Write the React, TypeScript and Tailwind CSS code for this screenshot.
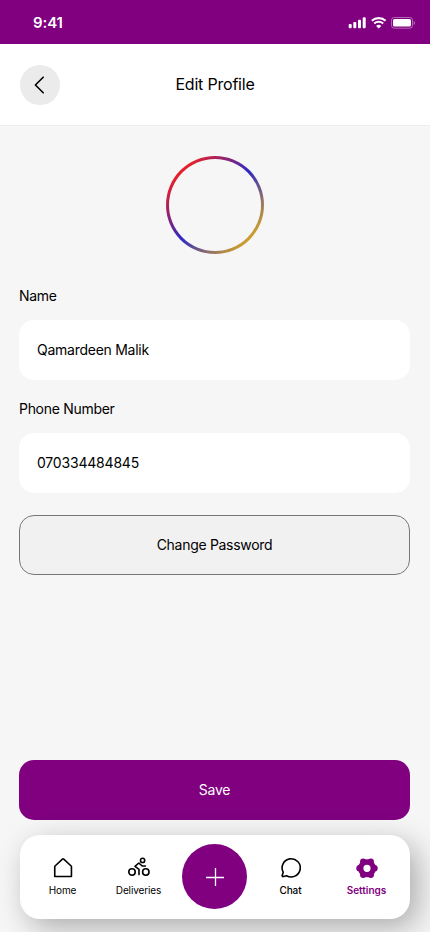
import React from "react";

function StatusBar() {
  return (
    <div className="flex h-11 items-center justify-between bg-[#800080] pl-[33px] pr-[15px] text-white">
      <span className="mt-[2px] text-[15px] leading-5 font-semibold tracking-[-0.1px]">9:41</span>
      <svg className="mt-[2px]" width="67" height="12" viewBox="0 0 67 12" fill="none">
        <rect x="0.7" y="7" width="3" height="4.3" rx="1" fill="white" />
        <rect x="5.3" y="5" width="3" height="6.3" rx="1" fill="white" />
        <rect x="10" y="2.7" width="3" height="8.6" rx="1" fill="white" />
        <rect x="14.7" y="0.3" width="3" height="11" rx="1" fill="white" />
        <path d="M23.8 3.8a10.2 10.2 0 0 1 13.8 0" stroke="white" strokeWidth="2.1" />
        <path d="M26.2 6.5a6.7 6.7 0 0 1 9 0" stroke="white" strokeWidth="2" />
        <path d="M28.1 9a3.9 3.9 0 0 1 5.2 0l-2.6 2.6z" fill="white" />
        <rect x="43.5" y="0.5" width="21" height="10.7" rx="2.7" stroke="white" strokeOpacity="0.4" />
        <rect x="45" y="2" width="18" height="7.6" rx="1.5" fill="white" />
        <path d="M65.7 4v4c.8-.3 1.3-1.1 1.3-2s-.5-1.7-1.3-2z" fill="white" fillOpacity="0.4" />
      </svg>
    </div>
  );
}

function Field({ label, value, valueStyle }: { label: string; value: string; valueStyle: string }) {
  return (
    <div>
      <div className="h-6 text-[14px] leading-6 tracking-[-0.3px]">{label}</div>
      <div className={`mt-3 flex h-[60px] items-center rounded-[15px] bg-white px-[18px] pb-px text-[14px] ${valueStyle}`}>
        {value}
      </div>
    </div>
  );
}

function HomeIcon() {
  return (
    <svg width="24" height="24" viewBox="0 0 24 24" fill="none" stroke="currentColor" strokeWidth="1.6" strokeLinejoin="round">
      <path d="M3.75 20.5V10.7a1 1 0 0 1 .3-.7l7.4-6.8a1 1 0 0 1 1.3 0l7.4 6.8a1 1 0 0 1 .3.7v9.8z" />
    </svg>
  );
}

function BikeIcon() {
  return (
    <svg width="24" height="24" viewBox="0 0 24 24" fill="none" stroke="currentColor" strokeWidth="1.6" strokeLinecap="round" strokeLinejoin="round">
      <circle cx="5" cy="16" r="3.2" />
      <circle cx="18.8" cy="16" r="3.2" />
      <circle cx="15.6" cy="4.4" r="2.1" />
      <path d="M18.4 10h-3.2l-3.4-3-3.8 3.4 4 3v5.2" />
    </svg>
  );
}

function ChatIcon() {
  return (
    <svg width="24" height="24" viewBox="0 0 24 24" fill="none" stroke="currentColor" strokeWidth="1.6" strokeLinecap="round" strokeLinejoin="round">
      <path d="M7.6 19.7a9.1 9.1 0 1 0-3.4-3.5l-1 3.2a.85.85 0 0 0 1.1 1.1z" />
    </svg>
  );
}

function SettingsIcon() {
  return (
    <svg width="24" height="24" viewBox="0 0 24 24" fill="none">
      <circle cx="12" cy="12.3" r="6.3" stroke="currentColor" strokeWidth="5.4" />
      <g fill="currentColor">
        <circle cx="4.5" cy="12.3" r="3.2" />
        <circle cx="19.5" cy="12.3" r="3.2" />
        <circle cx="8.25" cy="5.8" r="3.2" />
        <circle cx="15.75" cy="5.8" r="3.2" />
        <circle cx="8.25" cy="18.8" r="3.2" />
        <circle cx="15.75" cy="18.8" r="3.2" />
      </g>
    </svg>
  );
}

function NavItem({ icon, label, style }: { icon: React.ReactNode; label: string; style: string }) {
  return (
    <div className={`flex w-[76px] flex-col items-center pt-[21px] ${style}`}>
      {icon}
      <span className="mt-[2px] text-[10px] leading-4">{label}</span>
    </div>
  );
}

export default function App() {
  return (
    <div className="flex h-[932px] w-[430px] flex-col overflow-hidden bg-[#f6f6f6] font-['Inter',sans-serif] text-black">
      <StatusBar />
      <header className="grid h-[82px] shrink-0 grid-cols-[40px_1fr_40px] items-center border-b border-[#eeeeee] bg-white px-5">
        <button className="flex size-10 items-center justify-center rounded-full bg-[#ebebeb]">
          <svg width="20" height="20" viewBox="0 0 20 20" fill="none" stroke="black" strokeWidth="1.6" strokeLinecap="round" strokeLinejoin="round">
            <path d="M13.2 2.2 5.4 10l7.8 7.8" />
          </svg>
        </button>
        <h1 className="pb-[2px] text-center text-[16px] leading-6 tracking-[-0.2px]">Edit Profile</h1>
      </header>

      <main className="flex flex-1 flex-col pl-[19px] pr-5 pt-[30px]">
        <div className="ml-[147px] size-[98px] rounded-full bg-[linear-gradient(135deg,#e82028_15%,#2e28c4_50%,#cfa02c_85%)] p-[3px]">
          <div className="size-full rounded-full bg-[#f6f6f6]" />
        </div>
        <div className="mt-[30px] flex flex-col gap-[17px]">
          <Field label="Name" value="Qamardeen Malik" valueStyle="tracking-[-0.26px]" />
          <Field label="Phone Number" value="070334484845" valueStyle="tracking-[-0.2px]" />
        </div>
        <button className="mt-[22px] h-[60px] shrink-0 rounded-[15px] border border-[#777777] bg-[#f1f1f1] pb-px text-[14px] tracking-[-0.3px]">
          Change Password
        </button>
        <button className="mt-[185px] h-[60px] shrink-0 rounded-[15px] bg-[#800080] pb-px text-[14px] tracking-[-0.2px] text-white">
          Save
        </button>
        <nav className="ml-px mt-[15px] flex h-[84px] shrink-0 rounded-[20px] bg-white pl-[4.5px] shadow-[8px_9px_30px_rgba(0,0,0,0.3)]">
          <NavItem icon={<HomeIcon />} label="Home" style="tracking-[-0.15px]" />
          <NavItem icon={<BikeIcon />} label="Deliveries" style="tracking-[-0.12px]" />
          <div className="flex w-[76px] justify-center">
            <button className="mt-[9px] flex size-[65px] items-center justify-center rounded-full bg-[#800080]">
              <svg width="20" height="20" viewBox="0 0 20 20" stroke="white" strokeWidth="1.3">
                <path d="M10.5 1v18M1 10.5h18" />
              </svg>
            </button>
          </div>
          <NavItem icon={<ChatIcon />} label="Chat" style="font-medium tracking-[-0.1px]" />
          <NavItem icon={<SettingsIcon />} label="Settings" style="font-semibold text-[#800080]" />
        </nav>
      </main>
    </div>
  );
}
